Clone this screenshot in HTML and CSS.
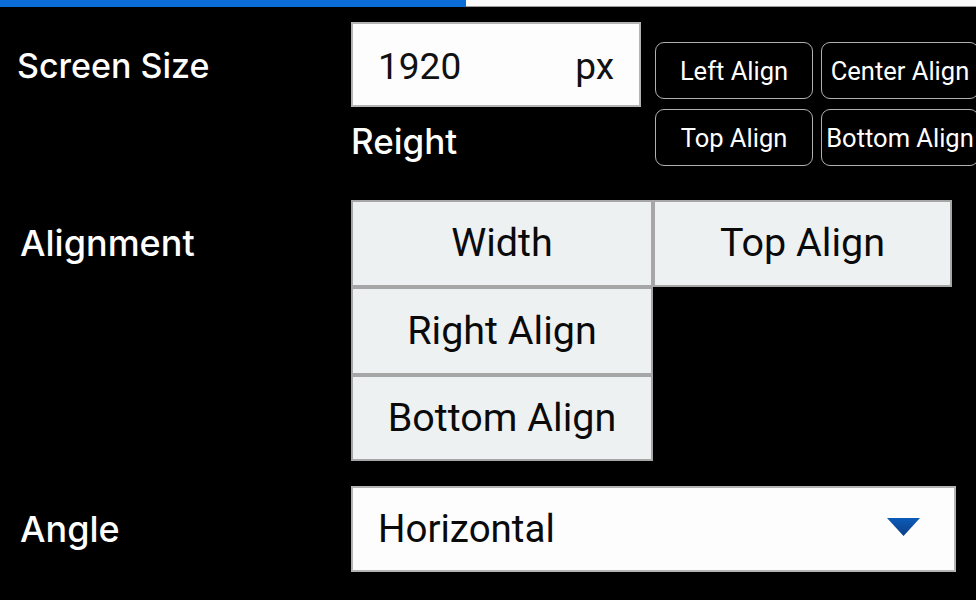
FILE: index.html
```html
<!DOCTYPE html>
<html>
<head>
<meta charset="utf-8">
<link rel="stylesheet" href="styles.css">
</head>
<body>
<div class="progress"><div class="progress-fill"></div><div class="progress-rest"></div></div>
<main class="form">
  <section class="row row-size">
    <div class="label label-size">Screen Size</div>
    <div class="size-fields">
      <div class="size-input"><span class="value">1920</span><span class="unit">px</span></div>
      <div class="sub-label">Reight</div>
    </div>
    <div class="small-buttons">
      <button class="sbtn">Left Align</button>
      <button class="sbtn">Center Align</button>
      <button class="sbtn">Top Align</button>
      <button class="sbtn">Bottom Align</button>
    </div>
  </section>
  <section class="row row-align">
    <div class="label label-align">Alignment</div>
    <div class="align-grid">
      <div class="cell">Width</div>
      <div class="cell">Top Align</div>
      <div class="cell">Right Align</div>
      <div class="cell empty"></div>
      <div class="cell">Bottom Align</div>
    </div>
  </section>
  <section class="row row-angle">
    <div class="label label-angle">Angle</div>
    <div class="select">
      <span class="select-value">Horizontal</span>
      <svg class="caret" width="33" height="18" viewBox="0 0 33 18"><defs><linearGradient id="cg" x1="0" y1="0" x2="0" y2="1"><stop offset="0" stop-color="#0b5bb8"/><stop offset="1" stop-color="#0d3f86"/></linearGradient></defs><polygon points="0,0 33,0 16.5,18" fill="url(#cg)"/></svg>
    </div>
  </section>
</main>
</body>
</html>
```
FILE: styles.css
```css
html, body {
  margin: 0;
  padding: 0;
  background: #000;
  width: 976px;
  height: 600px;
  overflow: hidden;
}
body {
  font-family: Roboto, "Liberation Sans", sans-serif;
  color: #fff;
}
.progress {
  display: flex;
  height: 7px;
}
.progress-fill {
  width: 466px;
  background: #0a6cd6;
}
.progress-rest {
  flex: 1;
  background: #fafafa;
  border-bottom: 1px solid #9a9a9a;
}
.form {
  display: flex;
  flex-direction: column;
}
.row {
  display: flex;
}
.label {
  font-family: Inter, "Liberation Sans", sans-serif;
  font-size: 35px;
  font-weight: 450;
  color: #fff;
  width: 351px;
  flex-shrink: 0;
  box-sizing: border-box;
}
.label-size {
  padding-left: 17px;
  padding-top: 23px;
  font-size: 34px;
}
.row-size {
  padding-top: 15px;
}
.size-fields {
  display: flex;
  flex-direction: column;
  flex-shrink: 0;
}
.size-input {
  box-sizing: border-box;
  width: 290px;
  height: 85px;
  background: #fdfdfd;
  border: 2px solid #b4b4b4;
  color: #111;
  font-size: 37px;
  display: flex;
  align-items: center;
  justify-content: space-between;
  padding: 3px 25px 0 25px;
}
.sub-label {
  font-family: Inter, "Liberation Sans", sans-serif;
  font-weight: 450;
  font-size: 35px;
  color: #fff;
  margin-top: 13px;
  line-height: 42px;
}
.small-buttons {
  display: grid;
  grid-template-columns: 158px 158px;
  grid-auto-rows: 57px;
  column-gap: 8px;
  row-gap: 10px;
  margin-left: 14px;
  margin-top: 20px;
  align-content: start;
  flex-shrink: 0;
}
.sbtn {
  box-sizing: border-box;
  background: #000;
  color: #fff;
  border: 1.5px solid #b0b0b0;
  border-radius: 9px;
  font-family: Roboto, sans-serif;
  font-size: 25.5px;
  padding: 0;
  white-space: nowrap;
}
.row-align {
  margin-top: 34px;
}
.label-align {
  padding-left: 20px;
  height: 86px;
  display: flex;
  align-items: center;
  font-size: 36px;
}
.align-grid {
  display: grid;
  grid-template-columns: 302px 299px;
  grid-template-rows: 87px 88px 86px;
}
.cell {
  box-sizing: border-box;
  background: #eef1f1;
  border: 2px solid #a6a6a6;
  color: #0a0a0a;
  font-size: 39.5px;
  display: flex;
  align-items: center;
  justify-content: center;
  padding-bottom: 2px;
}
.cell.empty {
  background: transparent;
  border: none;
}
.row-angle {
  margin-top: 25px;
}
.label-angle {
  padding-left: 20px;
  display: flex;
  align-items: center;
  font-size: 36px;
}
.select {
  box-sizing: border-box;
  width: 605px;
  height: 86px;
  background: #fdfdfd;
  border: 2px solid #b4b4b4;
  display: flex;
  align-items: center;
  justify-content: space-between;
  padding: 0 34px 0 25px;
  color: #0a0a0a;
  font-size: 38.5px;
}
.select-value {
  padding-bottom: 2px;
}
.caret {
  display: block;
  margin-bottom: 4px;
}
```
